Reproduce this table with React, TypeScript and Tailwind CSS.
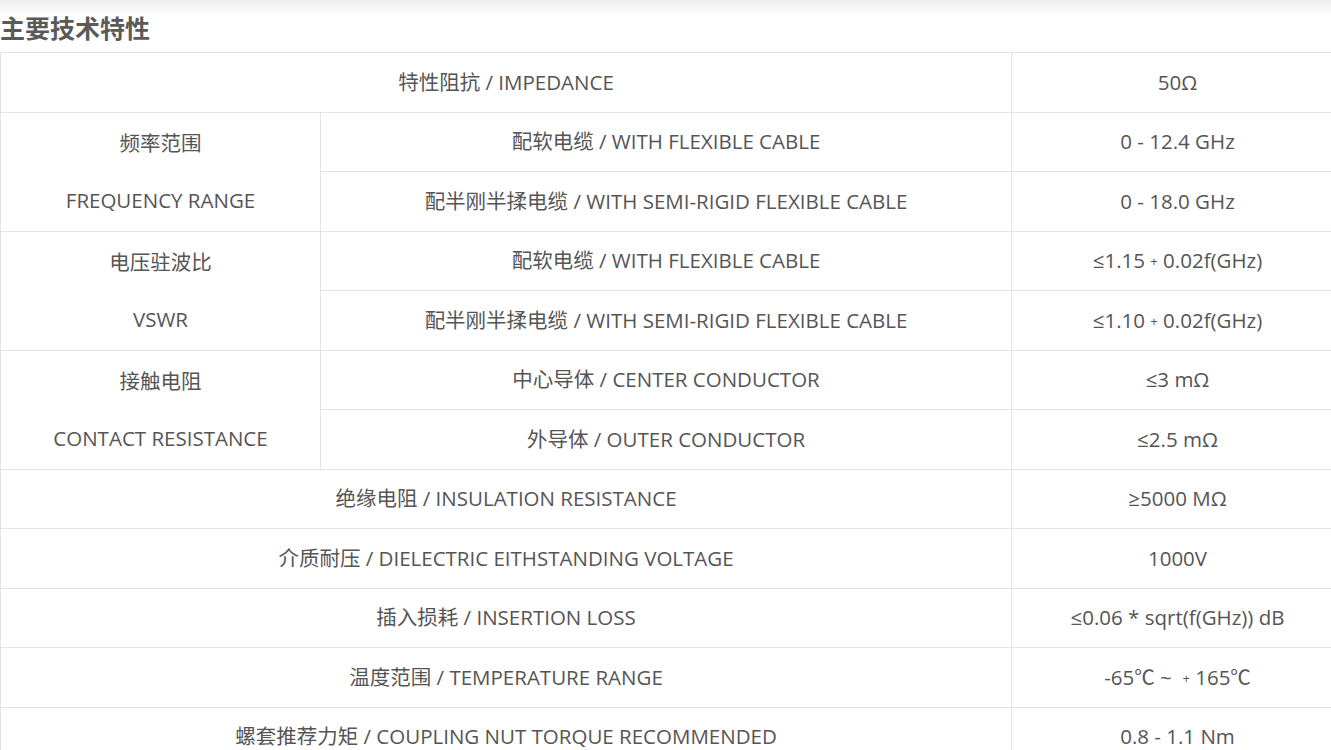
type Group = { zh: string; en: string; subs: { label: string; value: string }[] }

const groups: Group[] = [
  {
    zh: '频率范围',
    en: 'FREQUENCY RANGE',
    subs: [
      { label: '配软电缆 / WITH FLEXIBLE CABLE', value: '0 - 12.4 GHz' },
      { label: '配半刚半揉电缆 / WITH SEMI-RIGID FLEXIBLE CABLE', value: '0 - 18.0 GHz' },
    ],
  },
  {
    zh: '电压驻波比',
    en: 'VSWR',
    subs: [
      { label: '配软电缆 / WITH FLEXIBLE CABLE', value: '≤1.15 ＋ 0.02f(GHz)' },
      { label: '配半刚半揉电缆 / WITH SEMI-RIGID FLEXIBLE CABLE', value: '≤1.10 ＋ 0.02f(GHz)' },
    ],
  },
  {
    zh: '接触电阻',
    en: 'CONTACT RESISTANCE',
    subs: [
      { label: '中心导体 / CENTER CONDUCTOR', value: '≤3 mΩ' },
      { label: '外导体 / OUTER CONDUCTOR', value: '≤2.5 mΩ' },
    ],
  },
]

const tail = [
  { label: '绝缘电阻 / INSULATION RESISTANCE', value: '≥5000 MΩ' },
  { label: '介质耐压 / DIELECTRIC EITHSTANDING VOLTAGE', value: '1000V' },
  { label: '插入损耗 / INSERTION LOSS', value: '≤0.06 * sqrt(f(GHz)) dB' },
  { label: '温度范围 / TEMPERATURE RANGE', value: '-65℃ ~  ＋ 165℃' },
  { label: '螺套推荐力矩 / COUPLING NUT TORQUE RECOMMENDED', value: '0.8 - 1.1 Nm' },
]

const td = 'border border-[#e3e3e3] text-center align-middle p-0 whitespace-pre'

function Value({ text }: { text: string }) {
  // the small plus sign sits lower and lighter than the digits
  const parts = text.split('＋')
  if (parts.length === 1) return <>{text}</>
  return (
    <>
      {parts[0]}
      <span className="text-[13px] relative -top-[2px]">+</span>
      {parts[1]}
    </>
  )
}

function App() {
  return (
    <div
      className="w-[1331px] h-[750px] overflow-hidden bg-[linear-gradient(#ececec,#ffffff_16px)] text-[#555555]"
      style={{ fontFamily: '"Open Sans", "Noto Sans CJK SC", sans-serif' }}
    >
      <h2 className="pt-[12px] h-[52px] text-[25px] leading-[32px] font-bold text-[#5a5a5a]">主要技术特性</h2>
      <table className="w-[1343px] border-collapse text-[20.5px] table-fixed">
        <colgroup>
          <col className="w-[320px]" />
          <col className="w-[691px]" />
          <col className="w-[332px]" />
        </colgroup>
        <tbody>
          <tr className="h-[59.5px]">
            <td className={td} colSpan={2}>特性阻抗 / IMPEDANCE</td>
            <td className={td}>50Ω</td>
          </tr>
          {groups.map((g) =>
            g.subs.map((s, i) => (
              <tr key={g.zh + i} className="h-[59.5px]">
                {i === 0 && (
                  <td className={td} rowSpan={2}>
                    <div className="flex flex-col gap-[29px] leading-[28px]">
                      <span>{g.zh}</span>
                      <span>{g.en}</span>
                    </div>
                  </td>
                )}
                <td className={td}>{s.label}</td>
                <td className={td}>
                  <Value text={s.value} />
                </td>
              </tr>
            ))
          )}
          {tail.map((r) => (
            <tr key={r.label} className="h-[59.5px]">
              <td className={td} colSpan={2}>{r.label}</td>
              <td className={td}>
                <Value text={r.value} />
              </td>
            </tr>
          ))}
        </tbody>
      </table>
    </div>
  )
}

export default App
